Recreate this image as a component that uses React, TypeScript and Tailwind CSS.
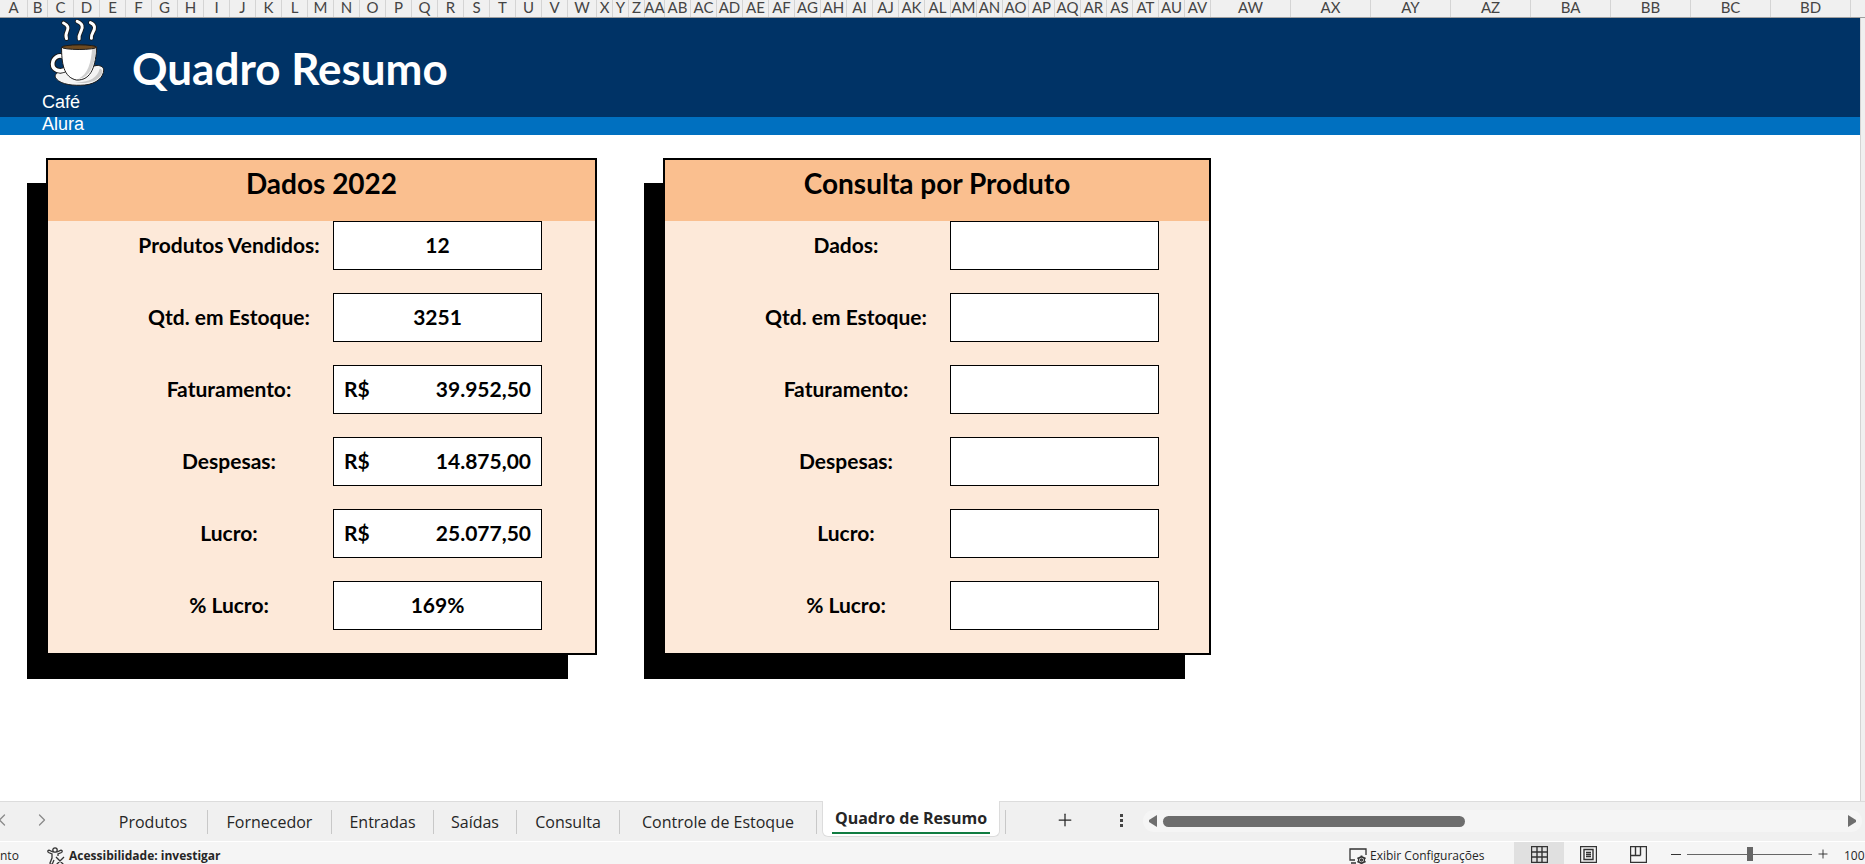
import { useState } from 'react'
import { ChevronLeft, ChevronRight, Plus } from 'lucide-react'

const letters = 'ABCDEFGHIJKLMNOPQRSTUVWXYZ'

const columnNames = [
  ...letters.split(''),
  ...letters.split('').map((l) => 'A' + l),
  'BA', 'BB', 'BC', 'BD',
]

const columnWidth = (name: string) => {
  if (name === 'A') return 28
  if (name === 'B' || name === 'AA') return 20
  if (name === 'W') return 29
  if (name === 'X' || name === 'Y' || name === 'Z') return 16
  if (columnNames.indexOf(name) >= columnNames.indexOf('AW')) return 80
  return 26
}

type Item = { label: string; value?: string; money?: boolean }

const resumo: Item[] = [
  { label: 'Produtos Vendidos:', value: '12' },
  { label: 'Qtd. em Estoque:', value: '3251' },
  { label: 'Faturamento:', value: '39.952,50', money: true },
  { label: 'Despesas:', value: '14.875,00', money: true },
  { label: 'Lucro:', value: '25.077,50', money: true },
  { label: '% Lucro:', value: '169%' },
]

const consulta: Item[] = [
  { label: 'Dados:' },
  { label: 'Qtd. em Estoque:' },
  { label: 'Faturamento:' },
  { label: 'Despesas:' },
  { label: 'Lucro:' },
  { label: '% Lucro:' },
]

const tabs = [
  { name: 'Produtos', width: 'w-[109px]' },
  { name: 'Fornecedor', width: 'w-[124px]' },
  { name: 'Entradas', width: 'w-[102px]' },
  { name: 'Saídas', width: 'w-[83px]' },
  { name: 'Consulta', width: 'w-[103px]' },
  { name: 'Controle de Estoque', width: 'w-[197px]' },
]

const steam = 'M101 40c16 8 15 17 10 27-4 8-4 13-1 20M142 35c17 7 18 17 12 29-4 8-8 14-6 24M182 39c16 7 14 18 8 28-4 7-6 12-5 19'
const handle = 'M99 142c-10-8-31 2-31 22 0 18 22 26 40 15'

function CoffeeLogo() {
  return (
    <svg viewBox="55 25 170 205" className="ml-1.5 h-[68px] w-[57px]" stroke="#1a1a1a" strokeWidth="3" strokeLinejoin="round">
      <path fill="none" strokeWidth="14" strokeLinecap="round" d={steam} />
      <path fill="none" stroke="#fff" strokeWidth="9" strokeLinecap="round" d={steam} />
      <path fill="#f4f4f4" d="M86 188c-11 6-13 13-7 20 14 18 53 22 86 19 36-3 57-25 57-45 0-8-7-14-20-14z" />
      <path fill="#c9c9c9" stroke="none" d="M130 218c44 4 73-11 80-40 9 1 10 9 5 18-12 21-47 31-85 22z" />
      <path fill="none" strokeWidth="17" d={handle} />
      <path fill="none" stroke="#fff" strokeWidth="11" d={handle} />
      <path fill="#fff" d="M95 113c0 46 5 91 45 99 47 2 58-47 61-100-22-8-86-7-106 1z" />
      <path fill="#d0d0d0" stroke="none" d="M187 118c-3 41-12 77-42 91 39-4 50-47 54-92z" />
      <ellipse cx="148" cy="113" rx="52" ry="7" fill="#6d4a20" />
    </svg>
  )
}

function Panel({ id, title, items, className }: { id: string; title: string; items: Item[]; className: string }) {
  return (
    <section className={'grid ' + className}>
      <div className="col-start-1 row-start-1 mt-[25px] w-[541px] bg-black" />
      <div className="col-start-1 row-start-1 mb-6 ml-[19px] border-2 border-black bg-[#fde9d9] pb-[23px] font-bold text-black">
        <h2 className="h-[61px] bg-[#fabf8f] pt-[5px] text-center text-[28px] leading-9">{title}</h2>
        <div className="flex flex-col gap-[23px]">
          {items.map((item, index) => (
            <div key={item.label} className="flex items-center pl-[77px]">
              <label htmlFor={id + index} className="w-52 pb-0.5 text-center text-[21px] whitespace-nowrap">
                {item.label}
              </label>
              <div className="flex h-[49px] w-[209px] items-center border border-black bg-white px-2.5 pb-0.5 text-[21px]">
                {item.money && <span>R$</span>}
                <input
                  id={id + index}
                  defaultValue={item.value}
                  className={item.money ? 'w-full min-w-0 text-right outline-none' : 'w-full min-w-0 text-center outline-none'}
                />
              </div>
            </div>
          ))}
        </div>
      </div>
    </section>
  )
}

export default function App() {
  const [zoom, setZoom] = useState(100)

  return (
    <div className="flex min-h-screen flex-col overflow-hidden bg-white font-['Lato',sans-serif]">
      <div className="flex h-[18px] border-b border-[#9f9f9f] bg-[#f0f0f0] text-[15px] leading-[14px] text-[#444]">
        {columnNames.map((name) => (
          <div
            key={name}
            style={{ width: columnWidth(name) }}
            className="flex shrink-0 justify-center border-r border-[#d4d4d4]"
          >
            {name}
          </div>
        ))}
      </div>

      <div className="flex grow bg-[#f0f0f0] pr-1">
        <main className="grow border-r border-[#d4d4d4] bg-white">
          <header className="flex h-[117px] items-start border-b-[18px] border-[#0070c0] bg-[#003366] pl-[42px] text-white">
            <div className="w-[90px] font-['Liberation_Sans',sans-serif] text-lg leading-[22px]">
              <CoffeeLogo />
              <p className="mt-[5px] w-14">Café Alura</p>
            </div>
            <h1 className="pt-[25px] text-[44px] leading-[50px] font-bold">Quadro Resumo</h1>
          </header>

          <div className="flex gap-[47px] pt-[23px] pl-[27px]">
            <Panel id="resumo" title="Dados 2022" items={resumo} className="w-[570px]" />
            <Panel id="consulta" title="Consulta por Produto" items={consulta} className="w-[567px]" />
          </div>
        </main>
      </div>

      <nav className="flex h-10 items-start border-t border-[#dcdcdc] bg-[#f0f0f0] font-['Open_Sans',sans-serif] text-base text-[#262626]">
        <div className="flex h-9 w-[99px] shrink-0 items-center text-[#8a8a8a]">
          <button aria-label="Planilha anterior" className="-ml-2"><ChevronLeft size={20} strokeWidth={1.5} /></button>
          <button aria-label="Próxima planilha" className="ml-5"><ChevronRight size={20} strokeWidth={1.5} /></button>
        </div>
        {tabs.map((tab) => (
          <button
            key={tab.name}
            className={'mt-2 h-6 shrink-0 border-r border-[#c8c8c8] leading-6 whitespace-nowrap ' + tab.width}
          >
            {tab.name}
          </button>
        ))}
        <button className="-mt-px ml-[5px] h-9 w-[178px] shrink-0 rounded-b-md border border-t-0 border-[#dcdcdc] bg-white px-[9px] font-bold whitespace-nowrap">
          <span className="block border-b-2 border-[#107c41] leading-7">Quadro de Resumo</span>
        </button>
        <div className="mt-2 ml-[5px] h-6 w-px shrink-0 bg-[#c8c8c8]" />
        <button aria-label="Nova planilha" className="mt-2 ml-[49px]"><Plus size={20} strokeWidth={1.5} /></button>
        <svg viewBox="0 0 4 20" className="mt-2 ml-[45px] h-5 w-1 shrink-0" fill="#444">
          <path d="M0 4h3v3H0zM0 9h3v3H0zM0 14h3v3H0z" />
        </svg>
        <div className="mt-2 mr-[3px] ml-[19px] flex h-[22px] grow items-center rounded-full bg-[#f5f5f5] px-1.5">
          <svg viewBox="0 0 8 12" className="mr-1.5 h-3 w-2 shrink-0" fill="#6e6e6e"><path d="M8 0v12L0 7V5z" /></svg>
          <div className="flex grow"><div className="h-[11px] w-[79%] max-w-[302px] rounded-full bg-[#6e6e6e]" /></div>
          <svg viewBox="0 0 8 12" className="h-3 w-2 shrink-0" fill="#6e6e6e"><path d="M0 0v12l8-5V5z" /></svg>
        </div>
      </nav>

      <footer className="flex h-[23px] items-center border-t border-white bg-[#f5f5f5] pt-1.5 font-['Open_Sans',sans-serif] text-xs text-[#262626]">
        <span className="w-[47px]">nto</span>
        <button className="flex items-center gap-1 font-bold whitespace-nowrap">
          <svg viewBox="0 0 18 18" className="size-[18px]" fill="none" stroke="#333" strokeWidth="1.3">
            <circle cx="8" cy="3" r="2.2" />
            <path d="M6 5 2 3.200C.5 3 .5 5 1.500 5.500L5 7v4l-2 5c0 1.500 2 1.500 2.500.5L7 13M10 5l4-1.800c1.500-.2 1.500 1.800.5 2.300L11 7v2M9 10l8 8M17 10l-8 8" />
          </svg>
          Acessibilidade: investigar
        </button>
        <button className="ml-auto flex w-[141px] items-center gap-[3px] whitespace-nowrap">
          <svg viewBox="0 0 18 18" className="size-[18px]" fill="none" stroke="#333" strokeWidth="1.3">
            <path d="M6 13H1V2h16v6M2 16h5" />
            <circle cx="12.500" cy="13" r="3" />
            <circle cx="12.500" cy="13" r="1" />
            <path strokeWidth="1.800" d="M12.500 8.500V10M12.500 16v1.500M8.500 10.700l1.300.8M15.200 14.500l1.300.8M8.500 15.300l1.300-.8M15.200 11.500l1.300-.8" />
          </svg>
          Exibir Configurações
        </button>
        <button aria-label="Normal" className="-mt-1.5 ml-6 flex h-[22px] w-[50px] items-end justify-center bg-[#e0e0e0]">
          <svg viewBox="0 0 17 17" className="mb-px size-[17px]" fill="none" stroke="#333">
            <path d="M.5.500h16v16H.5zM6 .5v16M11 .5v16M.5 6h16M.5 11h16" strokeWidth="1.400" />
          </svg>
        </button>
        <button aria-label="Layout da Página" className="-mt-1 ml-4">
          <svg viewBox="0 0 17 17" className="size-[17px]" fill="none" stroke="#333" strokeWidth="1.400">
            <path d="M.5.500h16v16H.5zM4 3.500h9v10H4zM6 6.500h5M6 8.500h5M6 10.500h5" />
          </svg>
        </button>
        <button aria-label="Quebra de Página" className="-mt-1 ml-[33px]">
          <svg viewBox="0 0 17 17" className="size-[17px]" fill="none" stroke="#333" strokeWidth="1.400">
            <path d="M.5.500h16v16H.5zM5.500.500v9M10.500.500v9M.5 9.500h10" />
          </svg>
        </button>
        <button aria-label="Diminuir zoom" onClick={() => setZoom(zoom - 10)} className="-mt-1 ml-6 flex h-3 w-2.5 items-center">
          <span className="h-px w-full bg-[#333]" />
        </button>
        <input
          type="range"
          aria-label="Zoom"
          min={10}
          max={190}
          value={zoom}
          onChange={(e) => setZoom(Number(e.target.value))}
          className="-mt-1 ml-1.5 h-4 w-[125px] appearance-none bg-[linear-gradient(#666,#666)] bg-[length:100%_1px] bg-center bg-no-repeat [&::-webkit-slider-thumb]:h-3.5 [&::-webkit-slider-thumb]:w-1.5 [&::-webkit-slider-thumb]:appearance-none [&::-webkit-slider-thumb]:bg-[#666]"
        />
        <button aria-label="Aumentar zoom" onClick={() => setZoom(zoom + 10)} className="-mt-1 ml-1">
          <Plus size={14} strokeWidth={1.5} />
        </button>
        <span className="ml-3.5 w-[21px] whitespace-nowrap">{zoom}</span>
      </footer>
    </div>
  )
}
